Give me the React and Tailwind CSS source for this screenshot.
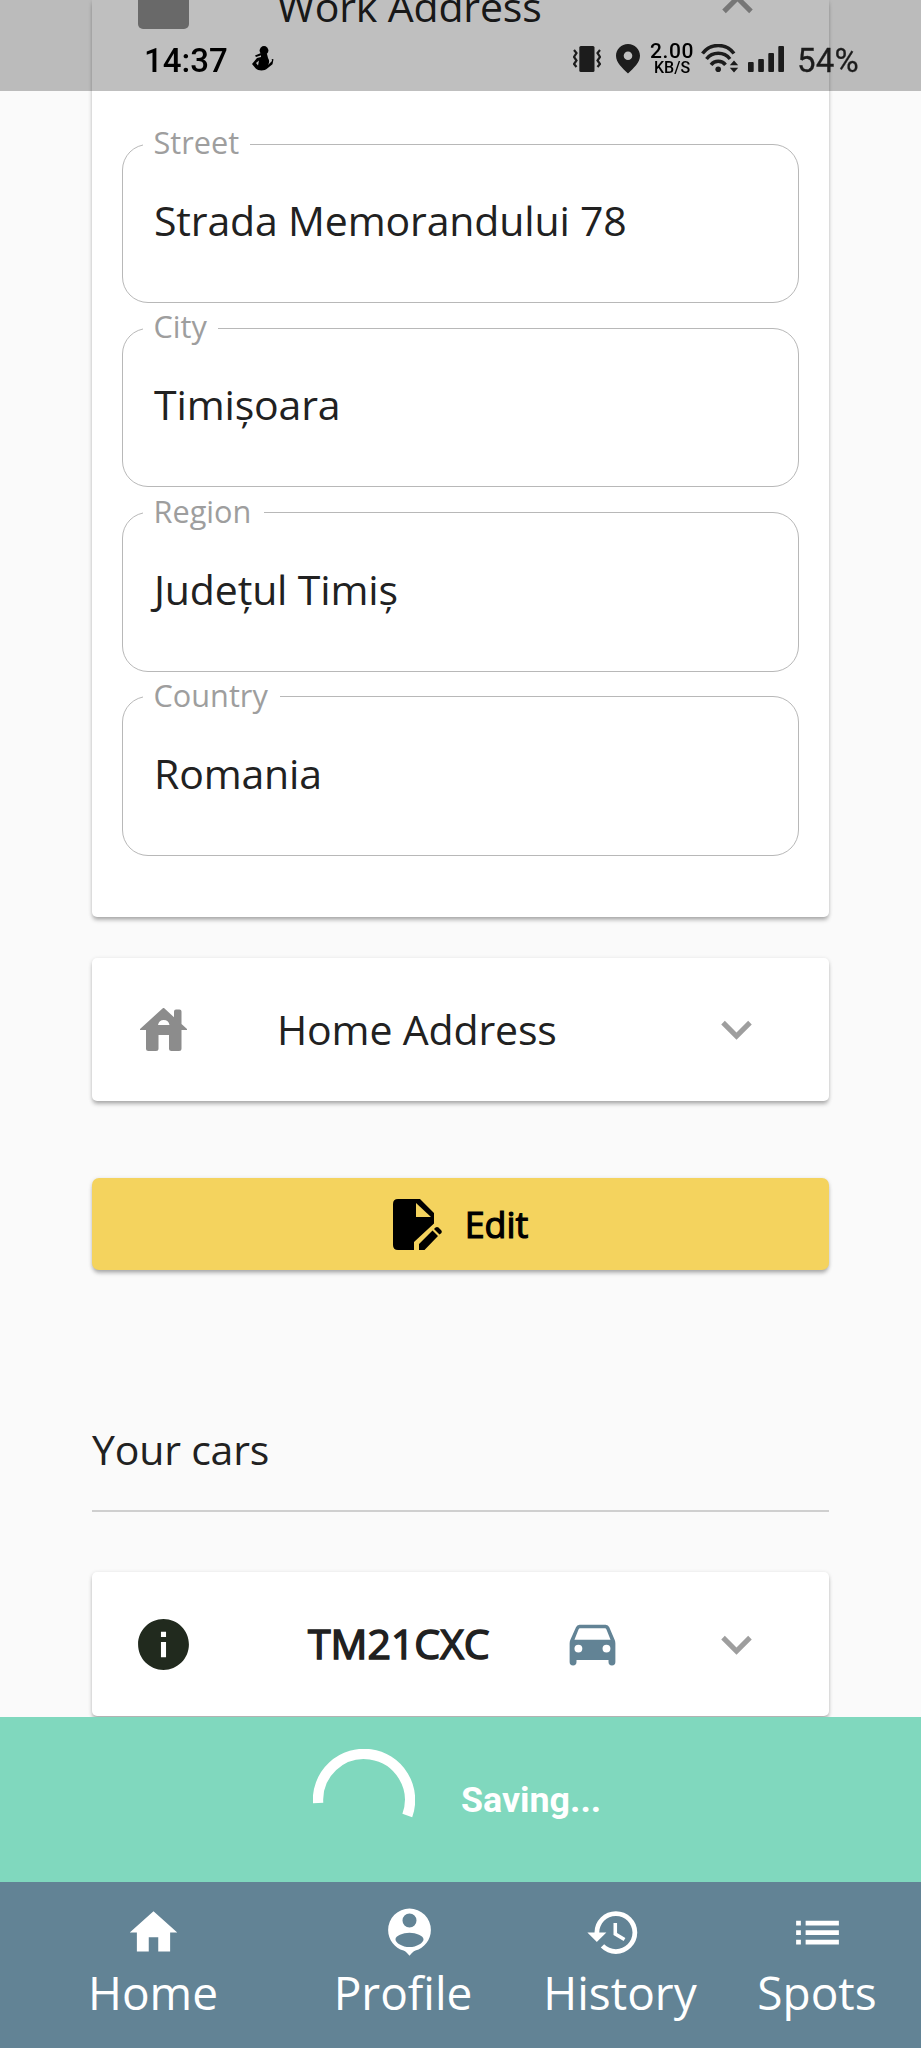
import React from "react";
import { MdHome, MdHistory, MdList, MdInfo } from "react-icons/md";

const fields = [
  { label: "Street", value: "Strada Memorandului 78", w: "w-[107px]" },
  { label: "City", value: "Timișoara", w: "w-[75px]" },
  { label: "Region", value: "Județul Timiș", w: "w-[121px]" },
  { label: "Country", value: "Romania", w: "w-[137px]" },
];

const cardShadow = "shadow-[0_4px_4px_-1px_rgba(0,0,0,0.25),0_1px_4px_rgba(0,0,0,0.15)]";

function Chevron({ up }) {
  return (
    <svg viewBox="0 0 24 24" className={"size-[61px] text-[#9e9e9e] " + (up ? "rotate-180" : "")} fill="currentColor">
      <path d="M16.59 8.59 12 13.17 7.41 8.59 6 10l6 6 6-6z" />
    </svg>
  );
}

function Field({ label, value, w }) {
  return (
    <fieldset className="h-[180px] rounded-[26px] border border-[#b8b8b8]">
      <legend className={"ml-[19.500px] h-[42px] pl-[11px] text-[30.7px] leading-[38px] text-[#9e9e9e] " + w}>{label}</legend>
      <div className="mt-[27px] pl-[31px] text-[41px] leading-[56px] tracking-[-0.15px] text-[#212121]">{value}</div>
    </fieldset>
  );
}

function Frog() {
  return (
    <svg viewBox="0 0 22 25" className="h-[25px] w-[22px]" fill="#000">
      <circle cx="12" cy="4.5" r="4.4" />
      <path d="M9 8h6l1 4c1.500 2 1.500 5 0 7l4-4-.3-2 1.800.2-1 5-5 4c-3 3-9 3-12 0L0 18l5-6 4-1z" />
      <path d="M3 9.500 9 7l1 2-6 2z" />
      <path d="m4 17 3-2.500-1 5z" fill="#bdbdbd" />
    </svg>
  );
}

function ProfileIcon({ className }) {
  return (
    <svg viewBox="0 0 24 24" className={className} fill="currentColor" fillRule="evenodd">
      <path d="M12 1.900a9 9 0 0 0-9 9c0 4.200 2.800 7.600 6.500 8.700.9.300 1.600 1.200 2.500 2.200.9-1 1.600-1.900 2.500-2.200 3.700-1.100 6.500-4.500 6.500-8.700a9 9 0 0 0-9-9zm0 2.100a2.950 2.950 0 1 1 0 5.900 2.950 2.950 0 0 1 0-5.900zm0 8.100c2.800 0 5.900 1.300 5.900 2.700 0 1.600-2.900 3.300-5.900 3.300s-5.900-1.700-5.900-3.300c0-1.400 3.100-2.700 5.900-2.700z" />
    </svg>
  );
}

function CarIcon({ className }) {
  return (
    <svg viewBox="0 0 24 24" className={className} fill="currentColor" fillRule="evenodd">
      <path d="M5.500 6Q5.900 5 6.900 5H17.200Q18.200 5 18.600 6L20.700 10.900Q21 11.600 21 12.400V19.700a1.350 1.350 0 0 1-2.700 0V18.900H5.700V19.700a1.350 1.350 0 0 1-2.700 0V12.400Q3 11.600 3.300 10.900zM7.100 6.400Q6.700 6.400 6.500 6.900L4.900 10.900H19.100L17.500 6.900Q17.300 6.400 16.900 6.400zM6.450 12.850a1.550 1.550 0 1 0 0 3.100 1.550 1.550 0 0 0 0-3.100zM17.500 12.850a1.550 1.550 0 1 0 0 3.100 1.550 1.550 0 0 0 0-3.100z" />
    </svg>
  );
}

function StatusBar() {
  return (
    <div className="fixed inset-x-0 top-0 z-20 flex h-[91px] items-start bg-black/25 font-[Roboto,sans-serif] text-[#1c1c1c]">
      <div className="ml-[144px] mt-[41px] text-[33px] font-medium leading-[40px] text-black">14:37</div>
      <div className="ml-[24px] mt-[46px]"><Frog /></div>
      <div className="grow" />
      <div className="flex">
        <svg viewBox="0 0 28 26" className="mt-[46px] h-[26px] w-[28px]">
          <rect x="6.300" y="0" width="15.200" height="26" rx="1.500" fill="#1c1c1c" />
          <path d="M1 4l2.500 3L1 11l2.500 3.500L1 18l2.500 3M27 4l-2.500 3L27 11l-2.500 3.500L27 18l-2.500 3" fill="none" stroke="#1c1c1c" strokeWidth="2.200" />
        </svg>
        <svg viewBox="0 0 24 30" className="ml-[15px] mt-[44px] h-[30px] w-6" fill="#1c1c1c" fillRule="evenodd">
          <path d="M12 0C5.300 0 0 5.300 0 11.800 0 19 6.500 24 12 29.500 17.500 24 24 19 24 11.800 24 5.300 18.700 0 12 0zm0 7.500a4.300 4.300 0 1 1 0 8.600 4.300 4.300 0 0 1 0-8.600z" />
        </svg>
        <div className="ml-[9px] mt-[44px] flex w-[46px] flex-col items-center text-black">
          <span className="text-[21px] font-medium leading-[15px] tracking-[0.6px]">2.00</span>
          <span className="mt-[1px] text-[16px] font-medium leading-[15px]">KB/S</span>
        </div>
        <svg viewBox="0 0 38 30" className="ml-[6px] mt-[44px] h-[30px] w-[38px]" fill="none" stroke="#1c1c1c" strokeWidth="3.500">
          <path d="M1.500 9.500a19.500 19.500 0 0 1 31.500 0M5.500 15a15 15 0 0 1 23.500 0M10 20.800a9.200 9.200 0 0 1 14.500 0" />
          <circle cx="17.200" cy="25.300" r="2.800" fill="#1c1c1c" stroke="none" />
          <path d="m28.800 21.200 4.200-4.700 4.200 4.700zM28.800 23.800l4.200 4.700 4.200-4.700z" fill="#1c1c1c" stroke="none" />
        </svg>
        <svg viewBox="0 0 36 26" className="ml-[9px] mt-[46px] h-[26px] w-9" fill="#1c1c1c">
          <rect x="0" y="16" width="5.700" height="10" rx="1" />
          <rect x="10.200" y="13" width="5.700" height="13" rx="1" />
          <rect x="20.300" y="7" width="5.700" height="19" rx="1" />
          <rect x="30.300" y="0" width="5.700" height="26" rx="1" />
        </svg>
        <div className="ml-[13px] mt-[41px] w-[124px] text-[33px] leading-[40px] tracking-[0.2px] [-webkit-text-stroke:0.3px_#1c1c1c]">54%</div>
      </div>
    </div>
  );
}

function NavItem({ icon: Icon, label, className, shift }) {
  return (
    <div className={"flex flex-col items-center " + className}>
      <Icon className={"size-[57px] " + (shift || "")} />
      <span className="text-[46px] leading-[62px]">{label}</span>
    </div>
  );
}

export default function App() {
  return (
    <div className="relative h-[2048px] w-[921px] overflow-hidden bg-[#fafafa] font-['Open_Sans','Noto_Sans',sans-serif] text-[#212121]">
      <StatusBar />
      <main className="px-[92px]">
        <section className={"h-[917px] rounded-b-[5px] bg-white px-[30px] " + cardShadow}>
          <div className="flex h-[123px] items-start">
            <div className="ml-[16px] h-[29px] w-[51px] rounded-b-[5px] bg-[#8c8c8c]" />
            <div className="-mt-[22px] ml-[88px] grow text-[41px] leading-[56px] tracking-[-0.15px]">Work Address</div>
            <div className="-mt-[26px] mr-[31px]"><Chevron up /></div>
          </div>
          <div className="flex flex-col gap-[4.300px]">
            {fields.map((f) => <Field key={f.label} {...f} />)}
          </div>
        </section>

        <section className={"mt-[41px] flex h-[143px] items-center rounded-[5px] bg-white " + cardShadow}>
          <svg viewBox="0 0 47 43" className="ml-[48px] h-[43px] w-[47px]" fill="#8c8c8c" fillRule="evenodd">
            <path d="M24 0 34 9.200V3.500Q34 1.500 36 1.500h3.500q2 0 2 2v12.500L47 21v1h-5.500v18.500q0 2.500-2.500 2.500h-7.500q-2.500 0-2.500-2.500V27H18.500v13.500q0 2.500-2.500 2.500H8.500Q6 43 6 40.500V22H0v-1L22.500.5Q23.500-.3 24 0zM18 17h11.500q-1-5-5.750-5T18 17z" />
          </svg>
          <div className="ml-[90px] grow text-[41px] tracking-[-0.15px]">Home Address</div>
          <div className="mr-[62px]"><Chevron /></div>
        </section>

        <button className={"mt-[77px] flex h-[92px] w-full items-center justify-center rounded-[7px] bg-[#f4d35e] text-black " + cardShadow}>
          <svg viewBox="0 0 49 51" className="h-[51px] w-[49px]">
            <path d="M5 0h22l14 14v10.500L21 43v8H5q-5 0-5-5V5q0-5 5-5z" />
            <path d="M23 4v14h15z" fill="#f4d35e" />
            <path d="M26 51v-6l13.500-13.500 5.500 5.500L31.500 51zM41 30l1.500-1.500q1.500-1.200 3 0l2.700 2.700q1.200 1.500 0 3L46.500 35.500z" />
          </svg>
          <span className="ml-[23px] mt-[1px] text-[35.800px] [-webkit-text-stroke:1.200px_#000]">Edit</span>
        </button>

        <h2 className="mt-[151px] text-[41px] leading-[56px] tracking-[-0.2px]">Your cars</h2>
        <div className="mt-[33px] h-[2px] bg-[#cfcfcf]" />

        <section className={"mt-[60px] flex h-[144px] items-center rounded-[5px] bg-white " + cardShadow}>
          <MdInfo className="ml-[41px] size-[61px] text-[#212a1e]" />
          <div className="ml-[114px] w-[190px] text-[41px] [-webkit-text-stroke:1.500px_#212121]">TM21CXC</div>
          <CarIcon className="-mt-[4px] ml-[64px] size-[61px] text-[#628395]" />
          <div className="grow" />
          <div className="mr-[62px]"><Chevron /></div>
        </section>
      </main>

      <div className="fixed inset-x-0 top-[1717px] z-10 flex h-[165px] items-center bg-[#80d8be]">
        <svg viewBox="0 0 102 102" className="ml-[313px] size-[102px]" fill="none" stroke="#fff" strokeWidth="10.400">
          <path d="M5.100 54A46 46 0 1 1 94.300 66.500" />
        </svg>
        <div className="ml-[46px] mt-[2px] font-[Roboto,sans-serif] text-[35.800px] font-bold text-white">Saving...</div>
      </div>

      <nav className="fixed inset-x-0 top-[1882px] z-10 flex h-[166px] bg-[#628395] pt-[22px] text-white">
        <NavItem icon={MdHome} label="Home" className="ml-[83px] w-[140px]" />
        <NavItem icon={ProfileIcon} label="Profile" className="ml-[100px] w-[160px]" shift="ml-[12px]" />
        <NavItem icon={MdHistory} label="History" className="ml-[57px] w-[160px]" shift="mr-[14px]" />
        <NavItem icon={MdList} label="Spots" className="ml-[50px] w-[134px]" />
      </nav>
    </div>
  );
}
